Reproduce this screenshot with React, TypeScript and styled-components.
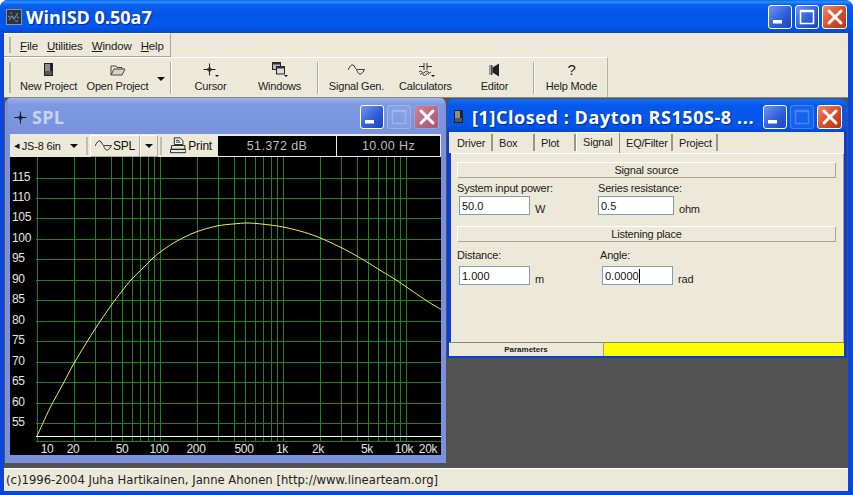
import React from 'react';
import styled, { createGlobalStyle, css } from 'styled-components';

const GlobalStyle = createGlobalStyle`
  html, body { margin: 0; padding: 0; background: #fff; }
  * { box-sizing: border-box; }
`;

const BEIGE = '#ece9d8';
const UI_FONT = '"Liberation Sans", Arial, sans-serif';
const STATUS_FONT = '"DejaVu Sans", Verdana, sans-serif';
const CAPTION_FONT = '"Open Sans", "Noto Sans", sans-serif';

type ButtonKind = 'min' | 'max' | 'close';

const MainWindow = styled.div`
  width: 853px;
  height: 495px;
  display: flex;
  flex-direction: column;
  background: #0a45dc;
  border-radius: 8px 8px 0 0;
  overflow: hidden;
  font-family: ${UI_FONT};
  font-size: 11px;
  letter-spacing: -0.2px;
  color: #1c1c1c;
`;

const MainTitle = styled.header`
  height: 33px;
  flex: none;
  display: flex;
  align-items: center;
  padding: 0 6px;
  background: linear-gradient(180deg, #0a6af0 0%, #2a90ff 6%, #0a5ff0 14%, #0355e8 45%, #0358ee 80%, #0348d0 100%);
`;

const TitleText = styled.span<{ $size: number; $gap: number; $spacing: number; $dim?: boolean }>`
  flex: 1;
  margin-left: ${p => p.$gap}px;
  font-family: ${CAPTION_FONT};
  font-weight: bold;
  font-size: ${p => p.$size}px;
  letter-spacing: ${p => p.$spacing}px;
  white-space: nowrap;
  color: ${p => (p.$dim ? '#c6d3f4' : '#fff')};
  text-shadow: ${p => (p.$dim ? 'none' : '1px 1px 1px #0a2a90')};
`;

const WinButtons = styled.div`
  display: flex;
  gap: 3px;
  flex: none;
`;

const buttonSkin = (kind: ButtonKind, dim?: boolean) => {
  if (kind === 'close') {
    return dim
      ? css`
          background: linear-gradient(135deg, #cf8494 0%, #b9657c 60%, #a85670 100%);
          border-color: #8ea4e8;
        `
      : css`
          background: linear-gradient(135deg, #ef8a6c 0%, #d9502e 50%, #b8320f 100%);
          border-color: #fff;
        `;
  }
  return dim
    ? css`
        background: rgba(255, 255, 255, 0.07);
        border-color: rgba(255, 255, 255, 0.22);
      `
    : css`
        background: linear-gradient(135deg, #6f95f0 0%, #2f5fdc 55%, #1c44c0 100%);
        border-color: #fff;
      `;
};

const WinButton = styled.div<{ $kind: ButtonKind; $dim?: boolean }>`
  width: ${p => (p.$kind === 'close' ? 25 : 24)}px;
  height: 24px;
  border-radius: 3px;
  border: 1px solid;
  display: flex;
  align-items: center;
  justify-content: center;
  ${p => buttonSkin(p.$kind, p.$dim)}
`;

const ButtonGlyph: React.FC<{ kind: ButtonKind; faint?: boolean }> = ({ kind, faint }) => (
  <svg width="22" height="22" viewBox="0 0 22 22">
    {kind === 'min' && <rect x="4" y="14" width="9" height="3.5" fill="#fff" />}
    {kind === 'max' && (
      <path
        d="M4.5 4.5h13v13h-13z M4.5 5.5h13"
        fill="none"
        stroke={faint ? 'rgba(255,255,255,0.22)' : '#fff'}
        strokeWidth="1.6"
      />
    )}
    {kind === 'close' && <path d="M5 5l12 12M17 5L5 17" stroke="#fff" strokeWidth="3" strokeLinecap="round" />}
  </svg>
);

const WindowControls: React.FC<{ dimMax?: boolean; dimClose?: boolean }> = ({ dimMax, dimClose }) => (
  <WinButtons>
    <WinButton $kind="min"><ButtonGlyph kind="min" /></WinButton>
    <WinButton $kind="max" $dim={dimMax}><ButtonGlyph kind="max" faint={dimMax} /></WinButton>
    <WinButton $kind="close" $dim={dimClose}><ButtonGlyph kind="close" /></WinButton>
  </WinButtons>
);

const Client = styled.div`
  flex: 1;
  min-height: 0;
  margin: 0 5px 4px 4px;
  display: flex;
  flex-direction: column;
  background: ${BEIGE};
`;

const MenuBand = styled.div`
  height: 24px;
  flex: none;
  width: 167px;
  display: flex;
  align-items: center;
  gap: 9px;
  padding: 1px 0 0 16px;
  border-top: 1px solid #fff;
  border-right: 1px solid #a8a698;
  border-bottom: 1px solid #a8a698;
  position: relative;
  &::before {
    content: '';
    position: absolute;
    left: 5px;
    top: 3px;
    bottom: 3px;
    width: 2px;
    background: #bdbaa8;
  }
`;

const MenuItem = styled.span`
  font-size: 11.5px;
  letter-spacing: -0.15px;
  u { text-decoration: underline; }
`;

const ToolBand = styled.div`
  height: 40px;
  flex: none;
  width: 604px;
  display: flex;
  align-items: stretch;
  padding: 4px 0 0 10px;
  border-top: 1px solid #fff;
  border-right: 1px solid #b4b2a4;
  position: relative;
  &::before {
    content: '';
    position: absolute;
    left: 5px;
    top: 4px;
    bottom: 4px;
    width: 2px;
    background: #bdbaa8;
  }
`;

const ToolButton = styled.div`
  width: 69px;
  flex: none;
  display: flex;
  flex-direction: column;
  align-items: center;
  gap: 3px;
  white-space: nowrap;
`;

const ToolIcon = styled.div`
  height: 15px;
  display: flex;
  align-items: center;
  justify-content: center;
  font-size: 15px;
`;

const DropArrow = styled.div<{ $mt: number; $ml: number }>`
  width: 0;
  height: 0;
  margin: ${p => p.$mt}px 0 0 ${p => p.$ml}px;
  border-left: 4px solid transparent;
  border-right: 4px solid transparent;
  border-top: 4px solid #111;
  flex: none;
`;

const ToolSep = styled.div<{ $ml: number; $mr: number }>`
  width: 1px;
  flex: none;
  margin: 0 ${p => p.$mr}px 3px ${p => p.$ml}px;
  background: #aaa89a;
  box-shadow: 1px 0 0 #fff;
`;

const Desktop = styled.main`
  flex: 1;
  min-height: 0;
  position: relative;
  background: #525252;
  border-top: 1px solid #8a8a82;
`;

const StatusBar = styled.footer`
  height: 23px;
  flex: none;
  display: flex;
  align-items: center;
  padding-left: 2px;
  font-family: ${STATUS_FONT};
  font-size: 11.6px;
  letter-spacing: 0.02px;
  color: #1d1d2b;
  white-space: nowrap;
  border-top: 1px solid #fff;
`;

const ChildWindow = styled.section<{ $x: number; $y: number; $w: number; $h: number; $active?: boolean }>`
  position: absolute;
  left: ${p => p.$x}px;
  top: ${p => p.$y}px;
  width: ${p => p.$w}px;
  height: ${p => p.$h}px;
  display: flex;
  flex-direction: column;
  border-radius: 6px 6px 0 0;
  overflow: hidden;
  background: ${p => (p.$active ? '#0a3ed6' : '#7c91de')};
  padding: 0 ${p => (p.$active ? 3 : 5)}px ${p => (p.$active ? 2 : 7)}px ${p => (p.$active ? 2 : 5)}px;
`;

const ChildTitle = styled.div<{ $active?: boolean; $h: number }>`
  height: ${p => p.$h}px;
  flex: none;
  display: flex;
  align-items: center;
  margin: 0 -3px 0 -2px;
  padding: 2px 5px 0 ${p => (p.$active ? 7 : 5)}px;
  background: ${p =>
    p.$active
      ? 'linear-gradient(180deg, #1a70f0 0%, #0458ee 20%, #0356ea 80%, #0348d4 100%)'
      : 'linear-gradient(180deg, #9db3ea 0%, #7f9ae2 18%, #7894de 80%, #7a94dc 100%)'};
`;

/* --- SPL window --- */

const PlotBar = styled.div`
  height: 23px;
  flex: none;
  display: flex;
  align-items: center;
  background: ${BEIGE};
  padding-left: 4px;
  color: #111;
  white-space: nowrap;
`;

const ComboText = styled.span`
  width: 56px;
  flex: none;
  display: flex;
  align-items: center;
  gap: 2px;
`;

const BarSep = styled.div<{ $ml: number; $mr: number }>`
  width: 2px;
  height: 18px;
  flex: none;
  margin: 0 ${p => p.$mr}px 0 ${p => p.$ml}px;
  background: #c2bfad;
`;

const RaisedCell = styled.div<{ $w: number }>`
  width: ${p => p.$w}px;
  height: 22px;
  flex: none;
  display: flex;
  align-items: center;
  justify-content: center;
  gap: 1px;
  font-size: 12px;
  border: 1px solid;
  border-color: #fff #b0ad9c #b0ad9c #fff;
`;

const PrintButton = styled.div`
  width: 42px;
  margin: 0 6px 0 8px;
  flex: none;
  display: flex;
  align-items: center;
  gap: 2px;
  font-size: 12px;
`;

const Readout = styled.div<{ $w: number }>`
  width: ${p => p.$w}px;
  height: 20px;
  flex: none;
  background: #000;
  color: #bdbdbd;
  font-size: 12.5px;
  letter-spacing: 0.4px;
  display: flex;
  align-items: center;
  justify-content: center;
  & + & { margin-left: 1px; }
`;

const ChartSvg = styled.svg`
  display: block;
  flex: none;
  width: 431px;
  height: 298px;
  background: #000;
`;

const GRID = '#1f821f';
const vFreqs = [10, 20, 30, 40, 50, 60, 70, 80, 90, 100, 200, 300, 400, 500, 600, 700, 800, 900, 1000,
  2000, 3000, 4000, 5000, 6000, 7000, 8000, 9000, 10000, 20000];
const fx = (f: number) => Math.round(36.5 + 123 * Math.log10(f / 10));
const dbLines = [115, 110, 105, 100, 95, 90, 85, 80, 75, 70, 65, 60, 55];
const dby = (db: number) => Math.round(177.5 + ((115 - db) * 245.5) / 60);
const freqLabels: [string, number][] = [
  ['10', 47], ['20', 73], ['50', 122], ['100', 159], ['200', 196], ['500', 244],
  ['1k', 282], ['2k', 318], ['5k', 367], ['10k', 404], ['20k', 428],
];
const curvePts: [number, number][] = [
  [37, 436], [50, 408], [63, 384], [73, 365], [85, 345], [97, 326], [110, 307], [122, 291], [131, 280],
  [143, 268], [153, 258], [163, 250], [177, 241], [196, 232], [217, 226], [233, 224], [249, 223], [270, 225],
  [283, 227], [300, 231], [318, 237], [340, 247], [355, 255], [367, 262], [378, 269], [393, 278], [405, 286],
  [427, 301], [442, 310],
];

// catmull-rom through the points read off the plot
const curvePath = curvePts.reduce((d, p, i) => {
  if (i === 0) return `M${p[0]} ${p[1]}`;
  const p0 = curvePts[Math.max(i - 2, 0)];
  const p1 = curvePts[i - 1];
  const p3 = curvePts[Math.min(i + 1, curvePts.length - 1)];
  const c1x = p1[0] + (p[0] - p0[0]) / 6;
  const c1y = p1[1] + (p[1] - p0[1]) / 6;
  const c2x = p[0] - (p3[0] - p1[0]) / 6;
  const c2y = p[1] - (p3[1] - p1[1]) / 6;
  return `${d}C${c1x} ${c1y} ${c2x} ${c2y} ${p[0]} ${p[1]}`;
}, '');

const SplChart: React.FC = () => (
  <ChartSvg viewBox="10 157 431 298">
    <g stroke={GRID} strokeWidth="1" shapeRendering="crispEdges">
      {vFreqs.map(f => (
        <line key={f} x1={fx(f)} x2={fx(f)} y1="157" y2="441" />
      ))}
      {dbLines.map(d => (
        <line key={d} x1="36" x2="441" y1={dby(d)} y2={dby(d)} />
      ))}
      <line x1="36" x2="441" y1="441.5" y2="441.5" />
    </g>
    <line x1="36" x2="441" y1="436.5" y2="436.5" stroke="#fff" strokeWidth="1" shapeRendering="crispEdges" />
    <path d={curvePath} fill="none" stroke="#eaf060" strokeWidth="1" />
    <g fill="#e4e4e4" fontFamily={UI_FONT} fontSize="12" letterSpacing="-0.3">
      {dbLines.map(d => (
        <text key={d} x="12" y={dby(d) + 3}>{d}</text>
      ))}
      {freqLabels.map(([t, x]) => (
        <text key={t} x={x} y="453" textAnchor="middle">{t}</text>
      ))}
    </g>
  </ChartSvg>
);

/* --- Driver window --- */

const TabRow = styled.div`
  height: 21px;
  flex: none;
  display: flex;
  align-items: flex-end;
  background: ${BEIGE};
  padding-left: 2px;
`;

const Tab = styled.div<{ $w: number; $active?: boolean }>`
  width: ${p => p.$w}px;
  flex: none;
  display: flex;
  align-items: center;
  padding-left: 6px;
  ${p =>
    p.$active
      ? css`
          height: 21px;
          padding-bottom: 3px;
          border: 1px solid #fff;
          border-bottom: none;
          border-right: 1px solid #8a8878;
          border-radius: 2px 2px 0 0;
        `
      : css`
          height: 17px;
          margin-bottom: 2px;
          border-right: 2px solid #9a9888;
        `}
`;

const TabPanel = styled.div`
  flex: 1;
  min-height: 0;
  background: ${BEIGE};
  border-top: 1px solid #fff;
  border-right: 1px solid #a4a294;
  margin-left: 2px;
  padding: 8px 7px 0 6px;
  display: flex;
  flex-direction: column;
`;

const GroupBar = styled.div<{ $mt: number }>`
  height: 16px;
  flex: none;
  margin-top: ${p => p.$mt}px;
  display: flex;
  align-items: center;
  justify-content: center;
  border: 1px solid;
  border-color: #fff #a8a696 #a8a696 #fff;
`;

const FieldRow = styled.div<{ $mt: number }>`
  display: flex;
  margin-top: ${p => p.$mt}px;
`;

const Field = styled.div<{ $w: number }>`
  width: ${p => p.$w}px;
  flex: none;
`;

const FieldControl = styled.div<{ $mt: number }>`
  display: flex;
  align-items: flex-end;
  margin-top: ${p => p.$mt}px;
  gap: 5px;
`;

const TextBox = styled.div<{ $w: number; $ml: number }>`
  width: ${p => p.$w}px;
  height: 19px;
  margin-left: ${p => p.$ml}px;
  flex: none;
  background: #fff;
  border: 1px solid #7f9db9;
  display: flex;
  align-items: center;
  padding-left: 2px;
  color: #111;
  letter-spacing: 0;
`;

const Caret = styled.i`
  width: 1px;
  height: 14px;
  background: #000;
`;

const Unit = styled.span`
  line-height: 12px;
  font-size: 11px;
`;

const ParamStatus = styled.div`
  height: 14px;
  flex: none;
  display: flex;
  background: ${BEIGE};
  border-top: 1px solid #8a8878;
`;

const ParamCell = styled.div`
  width: 155px;
  flex: none;
  display: flex;
  align-items: center;
  justify-content: center;
  font-size: 8px;
  font-weight: bold;
  letter-spacing: 0;
  color: #222;
  border-right: 1px solid #a8a070;
`;

const ParamFill = styled.div`
  flex: 1;
  background: #ffff00;
`;

/* --- small drawn icons --- */

const SpeakerBox = () => (
  <svg width="9" height="13" viewBox="0 0 9 13">
    <rect x="0.5" y="0.5" width="8" height="12" fill="#8c8c8c" stroke="#222" />
    <rect x="6" y="1" width="2" height="11" fill="#222" />
    <rect x="1" y="8" width="7" height="4" fill="#555" />
  </svg>
);

const FolderIcon = () => (
  <svg width="16" height="12" viewBox="0 0 16 12">
    <path d="M1 11V2h5l1 1.5h5V5" fill="none" stroke="#444" />
    <path d="M1 11l3-6h11l-3 6z" fill="#d8d4b8" stroke="#444" />
  </svg>
);

const TinyArrow = () => <path d="M13 13h4l-2 2z" fill="#111" />;

const CursorIcon: React.FC<{ color?: string; arrow?: boolean }> = ({ color = '#222', arrow }) => (
  <svg width="17" height="15" viewBox="0 0 17 15">
    <path d="M7.5 1.5v12M1.5 7.5h12" stroke={color} strokeWidth="1" />
    <circle cx="7.5" cy="7.5" r="1.8" fill="none" stroke={color} />
    {arrow && <TinyArrow />}
  </svg>
);

const WindowsIcon = () => (
  <svg width="17" height="15" viewBox="0 0 17 15">
    <rect x="1.5" y="0.5" width="8" height="7" fill="#bbb" stroke="#222" />
    <rect x="1.5" y="0.5" width="8" height="2" fill="#333" />
    <rect x="5.5" y="4.5" width="8" height="7.5" fill="#ddd" stroke="#222" />
    <rect x="5.5" y="4.5" width="8" height="2" fill="#333" />
    <TinyArrow />
  </svg>
);

const SineIcon = () => (
  <svg width="17" height="11" viewBox="0 0 17 11">
    <path d="M0 6C2 2 3.5 0.5 5 1S7.5 5 8.5 5.5c1 3 2.5 5 4 4.5s3-2.5 4-4.5" fill="none" stroke="#222" />
    <path d="M8.5 5.5h8" stroke="#444" />
  </svg>
);

const CalcIcon = () => (
  <svg width="18" height="15" viewBox="0 0 18 15">
    <path d="M2 4.5h5M10 4.5h5M7 1v7M10 1v7M2 10q1.5-2 3 0t3 0 3 0 3 0M3 12.5q1.5-2 3 0t3 0 3 0" fill="none" stroke="#333" />
    <path d="M14 13h4l-2 2z" fill="#111" />
  </svg>
);

const EditorIcon = () => (
  <svg width="11" height="14" viewBox="0 0 11 14">
    <rect x="0.5" y="2" width="3" height="10" fill="#444" />
    <path d="M3.5 4.5L10 0.5v13L3.5 9.5z" fill="#222" />
    <path d="M1.5 2v10" stroke="#aaa" />
  </svg>
);

const PrintIcon = () => (
  <svg width="17" height="17" viewBox="0 0 17 17">
    <path d="M4.5 0.5h6l3 3v4h-9z" fill="#fff" stroke="#222" />
    <path d="M6 3h4M6 5h5" stroke="#222" />
    <path d="M1.5 8.5h14v4h-14zM0.5 12.5h16v3.5h-16z" fill="#e8e8e0" stroke="#222" />
  </svg>
);

const AppIcon = () => (
  <svg width="16" height="16" viewBox="0 0 16 16">
    <rect width="16" height="16" fill="#2b3238" />
    <rect x="0.5" y="0.5" width="15" height="15" fill="none" stroke="#8a9296" />
    <path d="M3 11l3-4 2 3 4-6M4 4h2M9 12h3M2 7l2 1M11 8l2 1" stroke="#6f93b8" strokeWidth="1.2" fill="none" />
  </svg>
);

const App: React.FC = () => (
  <>
    <GlobalStyle />
    <MainWindow>
      <MainTitle>
        <AppIcon />
        <TitleText $size={18} $gap={4} $spacing={0}>WinISD 0.50a7</TitleText>
        <WindowControls />
      </MainTitle>
      <Client>
        <MenuBand>
          <MenuItem><u>F</u>ile</MenuItem>
          <MenuItem><u>U</u>tilities</MenuItem>
          <MenuItem><u>W</u>indow</MenuItem>
          <MenuItem><u>H</u>elp</MenuItem>
        </MenuBand>
        <ToolBand>
          <ToolButton><ToolIcon><SpeakerBox /></ToolIcon>New Project</ToolButton>
          <ToolButton><ToolIcon><FolderIcon /></ToolIcon>Open Project</ToolButton>
          <DropArrow $mt={15} $ml={5} />
          <ToolSep $ml={5} $mr={5} />
          <ToolButton><ToolIcon><CursorIcon arrow /></ToolIcon>Cursor</ToolButton>
          <ToolButton><ToolIcon><WindowsIcon /></ToolIcon>Windows</ToolButton>
          <ToolSep $ml={3} $mr={4} />
          <ToolButton><ToolIcon><SineIcon /></ToolIcon>Signal Gen.</ToolButton>
          <ToolButton><ToolIcon><CalcIcon /></ToolIcon>Calculators</ToolButton>
          <ToolButton><ToolIcon><EditorIcon /></ToolIcon>Editor</ToolButton>
          <ToolSep $ml={4} $mr={3} />
          <ToolButton><ToolIcon>?</ToolIcon>Help Mode</ToolButton>
        </ToolBand>
        <Desktop>
          <ChildWindow $x={1} $y={0} $w={441} $h={365}>
            <ChildTitle $h={36}>
              <CursorIcon color="#1a1a2a" />
              <TitleText $size={18} $gap={2} $spacing={0.3} $dim>SPL</TitleText>
              <WindowControls dimMax dimClose />
            </ChildTitle>
            <PlotBar>
              <ComboText><span>◂</span>JS-8 6in</ComboText>
              <DropArrow $mt={1} $ml={0} />
              <BarSep $ml={8} $mr={2} />
              <RaisedCell $w={50}><SineIcon />SPL</RaisedCell>
              <RaisedCell $w={18}><DropArrow $mt={1} $ml={0} /></RaisedCell>
              <BarSep $ml={2} $mr={0} />
              <PrintButton><PrintIcon />Print</PrintButton>
              <Readout $w={118}>51.372 dB</Readout>
              <Readout $w={103}>10.00 Hz</Readout>
            </PlotBar>
            <SplChart />
          </ChildWindow>
          <ChildWindow $x={443} $y={1} $w={400} $h={259} $active>
            <ChildTitle $active $h={33}>
              <SpeakerBox />
              <TitleText $size={18} $gap={9} $spacing={0.57}>[1]Closed : Dayton RS150S-8 ...</TitleText>
              <WindowControls dimMax />
            </ChildTitle>
            <TabRow>
              <Tab $w={42}>Driver</Tab>
              <Tab $w={42}>Box</Tab>
              <Tab $w={41}>Plot</Tab>
              <Tab $w={44} $active>Signal</Tab>
              <Tab $w={53}>EQ/Filter</Tab>
              <Tab $w={45}>Project</Tab>
            </TabRow>
            <TabPanel>
              <GroupBar $mt={0}>Signal source</GroupBar>
              <FieldRow $mt={4}>
                <Field $w={141}>
                  System input power:
                  <FieldControl $mt={2}>
                    <TextBox $w={71} $ml={2}>50.0</TextBox>
                    <Unit>W</Unit>
                  </FieldControl>
                </Field>
                <Field $w={200}>
                  Series resistance:
                  <FieldControl $mt={2}>
                    <TextBox $w={76} $ml={0}>0.5</TextBox>
                    <Unit>ohm</Unit>
                  </FieldControl>
                </Field>
              </FieldRow>
              <GroupBar $mt={11}>Listening place</GroupBar>
              <FieldRow $mt={7}>
                <Field $w={143}>
                  Distance:
                  <FieldControl $mt={5}>
                    <TextBox $w={71} $ml={2}>1.000</TextBox>
                    <Unit>m</Unit>
                  </FieldControl>
                </Field>
                <Field $w={200}>
                  Angle:
                  <FieldControl $mt={5}>
                    <TextBox $w={71} $ml={2}>0.0000<Caret /></TextBox>
                    <Unit>rad</Unit>
                  </FieldControl>
                </Field>
              </FieldRow>
            </TabPanel>
            <ParamStatus>
              <ParamCell>Parameters</ParamCell>
              <ParamFill />
            </ParamStatus>
          </ChildWindow>
        </Desktop>
        <StatusBar>(c)1996-2004 Juha Hartikainen, Janne Ahonen [http://www.linearteam.org]</StatusBar>
      </Client>
    </MainWindow>
  </>
);

export default App;
